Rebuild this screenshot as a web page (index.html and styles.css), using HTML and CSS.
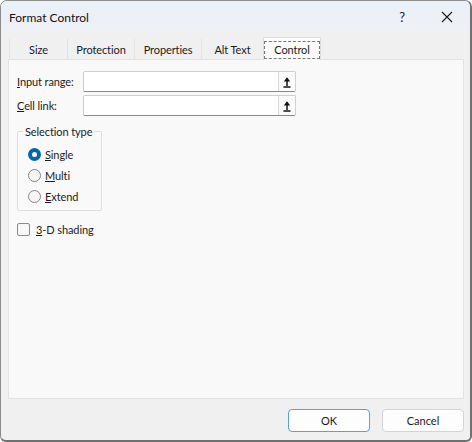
FILE: index.html
```html
<!DOCTYPE html>
<html>
<head>
<meta charset="utf-8">
<link rel="stylesheet" href="styles.css">
</head>
<body>
<div class="window">
  <div class="titlebar">
    <span class="title">Format Control</span>
    <div class="title-btns">
      <span class="help">?</span>
      <svg class="close" width="12" height="12" viewBox="0 0 12 12"><path d="M1 1L11 11M11 1L1 11" stroke="#1a1a1a" stroke-width="1.1" fill="none"/></svg>
    </div>
  </div>
  <div class="body">
    <div class="tabs">
      <div class="tab t-size">Size</div>
      <div class="tab t-prot">Protection</div>
      <div class="tab t-prop">Properties</div>
      <div class="tab t-alt">Alt Text</div>
      <div class="tab t-ctrl active"><span class="focus">Control</span></div>
    </div>
    <div class="panel">
      <div class="row">
        <label class="lbl"><u>I</u>nput range:</label>
        <div class="input"><span class="pick"><svg width="8" height="12" viewBox="0 0 8 12"><path d="M4 2.5V10" stroke="#111" stroke-width="1.5"/><path d="M0.8 5.6L4 1.2L7.2 5.6Z" fill="#111"/><path d="M0.5 11H7.5" stroke="#111" stroke-width="1.3"/></svg></span></div>
      </div>
      <div class="row">
        <label class="lbl"><u>C</u>ell link:</label>
        <div class="input"><span class="pick"><svg width="8" height="12" viewBox="0 0 8 12"><path d="M4 2.5V10" stroke="#111" stroke-width="1.5"/><path d="M0.8 5.6L4 1.2L7.2 5.6Z" fill="#111"/><path d="M0.5 11H7.5" stroke="#111" stroke-width="1.3"/></svg></span></div>
      </div>
      <fieldset class="group">
        <legend>Selection type</legend>
        <div class="radio-row"><span class="radio on"></span><span><u>S</u>ingle</span></div>
        <div class="radio-row"><span class="radio"></span><span><u>M</u>ulti</span></div>
        <div class="radio-row"><span class="radio"></span><span><u>E</u>xtend</span></div>
      </fieldset>
      <div class="check-row"><span class="check"></span><span><u>3</u>-D shading</span></div>
    </div>
    <div class="footer">
      <button class="btn ok">OK</button>
      <button class="btn">Cancel</button>
    </div>
  </div>
</div>
</body>
</html>
```
FILE: styles.css
```css
* { box-sizing: border-box; }
html, body { margin: 0; padding: 0; }
body {
  width: 472px; height: 442px; overflow: hidden;
  font-family: Lato, "Noto Sans", sans-serif;
  font-size: 11px;
  letter-spacing: -0.1px;
  color: #1b1b1b;
  background: #ffffff;
}
.window {
  width: 472px; height: 442px;
  border: 1px solid #8c8c8c;
  border-right: 2px solid #707070;
  border-bottom: 2px solid #707070;
  border-radius: 7px 7px 6px 6px;
  background: #f0f0f0;
  display: flex; flex-direction: column;
  overflow: hidden;
}
.titlebar {
  height: 31px;
  background: linear-gradient(#eaf0f8, #eef1f5);
  display: flex; align-items: center; justify-content: space-between;
  padding: 0 0 0 8px;
}
.title { font-size: 12px; letter-spacing: 0; color: #111; margin-top: 1px; }
.title-btns { display: flex; align-items: center; height: 100%; }
.help { font-size: 13px; width: 46px; text-align: center; margin-left: 2px; }
.close { margin: 0 17px 0 16px; }
.body { flex: 1; display: flex; flex-direction: column; padding: 6px 6px 0 7px; }
.tabs { display: flex; height: 21px; padding-left: 1px; }
.tab {
  height: 21px; display: flex; align-items: center; justify-content: center;
  border-right: 1px solid #e2e2e2; background: #f0f0f0;
  margin-top: 1px;
}
.t-size { width: 59px; border-left: 1px solid #e2e2e2; }
.t-prot { width: 67px; }
.t-prop { width: 67px; }
.t-alt { width: 61px; border-right: none; }
.t-ctrl { width: 58px; }
.tab.active {
  background: #fbfbfb; border: 1px solid #dcdcdc; border-bottom: none;
  margin-top: -1px; height: 23px; position: relative; z-index: 1;
}
.focus {
  border: 1px dashed #777; padding: 1px 9px 2px; line-height: 13px; margin-top: 1px;
}
.panel {
  height: 340px; width: 456px;
  background: #f9f9f9; border: 1px solid #e3e3e3;
  padding: 11px 8px 0 8px;
  display: flex; flex-direction: column;
}
.row { display: flex; align-items: center; height: 21px; margin-bottom: 3px; }
.lbl { width: 66px; }
.input {
  width: 213px; height: 21px; background: #fff;
  border: 1px solid #cfcfcf; border-bottom-color: #8a8a8a;
  display: flex; justify-content: flex-end; align-items: stretch;
  border-radius: 2px;
}
.pick {
  width: 17px; border-left: 1px solid #d8d8d8; background: #fbfbfb;
  display: flex; align-items: center; justify-content: center;
}
.group {
  margin: 5px 0 0 0; padding: 5px 0 3px 10px;
  width: 85px; min-width: 0;
  border: 1px solid #dedede; border-radius: 2px;
}
.group legend {
  padding: 0 2px; margin-left: -5px;
  white-space: nowrap; line-height: 15px;
}
.radio-row { display: flex; align-items: center; height: 21px; gap: 4px; white-space: nowrap; }
.radio {
  width: 13px; height: 13px; border-radius: 50%; flex: none;
  border: 1px solid #858585; background: #f5f5f5;
}
.radio.on { border: 4px solid #0066b8; background: #fff; }
.check-row { display: flex; align-items: center; gap: 6px; margin-top: 10px; height: 16px; }
.check {
  width: 13px; height: 13px; border: 1px solid #8a8a8a; border-radius: 2px; background: #f7f7f7;
}
.footer {
  display: flex; justify-content: flex-end; gap: 12px;
  padding: 10px 0 0 0;
}
.btn {
  width: 82px; height: 23px;
  font-family: Lato, "Noto Sans", sans-serif; font-size: 11px; color: #1b1b1b;
  background: #fdfdfd; border: 1px solid #d3d3d3; border-radius: 4px;
  padding: 0;
}
.btn.ok { border-color: #5e9fd9; }
```
